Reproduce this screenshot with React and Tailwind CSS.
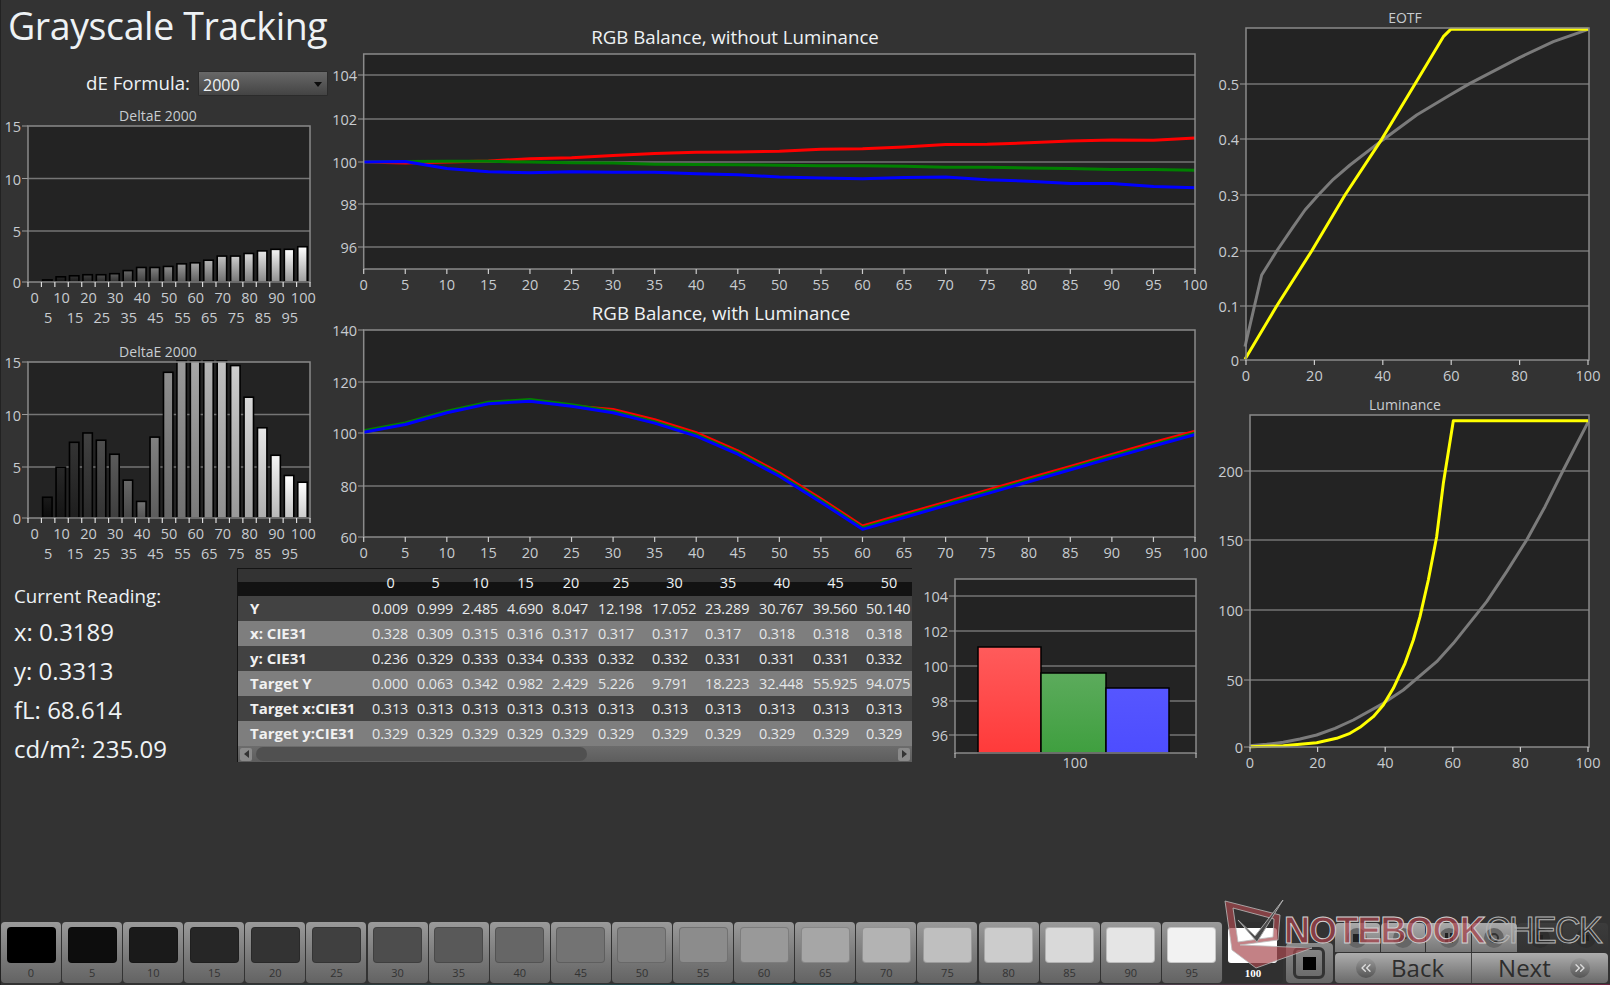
import { ChevronsLeft, ChevronsRight } from "lucide-react";

const labelCls = "fill-[#c8ccd0] text-[14.5px]";
const steps = Array.from({ length: 21 }, (_, i) => i * 5);

const linePts = (pts) => pts.map((p) => p.join(",")).join(" ");

// zoomed crop coords -> page coords
const fromZoom = (pts, ox, oy) => pts.map(([x, y]) => [ox + x / 3, oy + y / 3]);

const deltaA = [0, 0.2, 0.5, 0.6, 0.7, 0.7, 0.8, 1.1, 1.4, 1.4, 1.5, 1.75, 1.85, 2.1, 2.5, 2.5, 2.75, 3.0, 3.15, 3.15, 3.4];
const deltaB = [0, 2, 4.9, 7.3, 8.2, 7.5, 6.15, 3.65, 1.6, 7.8, 14.05, 16, 16, 16, 16, 14.7, 11.65, 8.7, 6.05, 4.1, 3.45];

const balRed = [100, 99.95, 100, 100.05, 100.15, 100.2, 100.3, 100.4, 100.45, 100.47, 100.5, 100.6, 100.62, 100.7, 100.82, 100.83, 100.9, 100.98, 101.03, 101.02, 101.12];
const balGreen = [100, 100.02, 100.03, 100.03, 100, 99.97, 99.95, 99.9, 99.88, 99.87, 99.85, 99.83, 99.83, 99.8, 99.75, 99.75, 99.72, 99.7, 99.65, 99.65, 99.62];
const balBlue = [100, 100.02, 99.7, 99.55, 99.5, 99.55, 99.52, 99.52, 99.45, 99.4, 99.3, 99.25, 99.22, 99.27, 99.3, 99.17, 99.1, 99, 99, 98.85, 98.8];
const lumBlue = [100.3, 103.3, 107.8, 111.3, 112.3, 110.3, 107.8, 103.8, 98.8, 91.8, 83.3, 73.3, 62.8, 67.4, 72, 76.6, 81.2, 85.8, 90.4, 95, 99.4];

const table = [
  ["Y", ["0.009", "0.999", "2.485", "4.690", "8.047", "12.198", "17.052", "23.289", "30.767", "39.560", "50.140"]],
  ["x: CIE31", ["0.328", "0.309", "0.315", "0.316", "0.317", "0.317", "0.317", "0.317", "0.318", "0.318", "0.318"]],
  ["y: CIE31", ["0.236", "0.329", "0.333", "0.334", "0.333", "0.332", "0.332", "0.331", "0.331", "0.331", "0.332"]],
  ["Target Y", ["0.000", "0.063", "0.342", "0.982", "2.429", "5.226", "9.791", "18.223", "32.448", "55.925", "94.075"]],
  ["Target x:CIE31", ["0.313", "0.313", "0.313", "0.313", "0.313", "0.313", "0.313", "0.313", "0.313", "0.313", "0.313"]],
  ["Target y:CIE31", ["0.329", "0.329", "0.329", "0.329", "0.329", "0.329", "0.329", "0.329", "0.329", "0.329", "0.329"]],
];
const tableCols = "grid-cols-[134px_45px_45px_45px_45px_46px_54px_53px_54px_54px_53px_46px]";

const Plot = ({ x0, y0, x1, y1, grid = [] }) => (
  <>
    <rect x={x0} y={y0} width={x1 - x0} height={y1 - y0} fill="#232323" />
    {grid.map((y) => (
      <line key={y} x1={x0} x2={x1} y1={y} y2={y} stroke="#757575" strokeWidth="1.5" />
    ))}
  </>
);

const Frame = ({ x0, y0, x1, y1 }) => (
  <rect x={x0} y={y0} width={x1 - x0} height={y1 - y0} fill="none" stroke="#8a8a8a" strokeWidth="1.5" />
);

const YLabels = ({ items, x }) =>
  items.map(([t, y]) => (
    <g key={t}>
      <line x1={x} x2={x + 6} y1={y} y2={y} stroke="#9a9a9a" />
      <text x={x - 1} y={y + 6} textAnchor="end" className={labelCls}>{t}</text>
    </g>
  ));

const DeltaChart = ({ vals, id }) => {
  const x0 = 28, x1 = 310, y0 = 22, y1 = 178;
  const cat = (x1 - x0) / 21;
  return (
    <svg width="330" height="228" viewBox="0 0 330 228" className="block overflow-visible">
      <text x="158" y="17" textAnchor="middle" className="fill-[#c8ccd0] text-[14px]">DeltaE 2000</text>
      <Plot x0={x0} y0={y0} x1={x1} y1={y1} grid={[74.5, 127]} />
      <defs>
        {vals.map((v, i) => {
          const lvl = Math.round(i * 12.75);
          const low = Math.round(lvl * (id === "a" ? 0.62 : 0.8));
          return (
            <linearGradient key={i} id={`${id}${i}`} x1="0" y1="0" x2="0" y2="1">
              <stop offset="0" stopColor={`rgb(${lvl + 14},${lvl + 14},${lvl + 14})`} />
              <stop offset="1" stopColor={`rgb(${low},${low},${low})`} />
            </linearGradient>
          );
        })}
      </defs>
      {vals.map((v, i) =>
        v > 0 ? (
          <rect
            key={i}
            x={x0 + cat * i + 1.2}
            y={Math.max(y1 - v * 10.37, y0 - 1)}
            width={cat - 4}
            height={Math.min(v * 10.37, y1 - y0 + 1)}
            fill={`url(#${id}${i})`}
            stroke="#000"
            strokeWidth="1.6"
          />
        ) : null
      )}
      <Frame x0={x0} y0={y0} x1={x1} y1={y1} />
      <YLabels x={22} items={[["15", y0], ["10", 74.5], ["5", 127], ["0", y1]]} />
      {Array.from({ length: 22 }, (_, i) => (
        <line key={i} x1={x0 + cat * i} x2={x0 + cat * i} y1={y1} y2={y1 + 5} stroke="#ddd" strokeWidth="1.2" />
      ))}
      {steps.map((p, i) => (
        <text key={p} x={x0 + cat * (i + 0.5)} y={i % 2 ? 219 : 199} textAnchor="middle" className={labelCls}>{p}</text>
      ))}
    </svg>
  );
};

const BalanceChart = ({ title, top, height, y0, y1, grid, yLabels, series, titleY, titleX }) => {
  const x0 = 363.7, x1 = 1195;
  return (
    <svg width="875" height={height} viewBox={`330 ${top} 875 ${height}`} className="block overflow-visible">
      <text x={titleX} y={titleY} textAnchor="middle" className="fill-[#eef2f5] text-[18.7px]">{title}</text>
      <Plot x0={x0} y0={y0} x1={x1} y1={y1} grid={grid} />
      {series.map(([pts, color, w]) => (
        <polyline key={color} points={linePts(pts)} fill="none" stroke={color} strokeWidth={w} strokeLinejoin="round" />
      ))}
      <Frame x0={x0} y0={y0} x1={x1} y1={y1} />
      <YLabels x={358} items={yLabels} />
      {steps.map((p) => {
        const x = x0 + p * 8.313;
        return (
          <g key={p}>
            <line x1={x} x2={x} y1={y1} y2={y1 + 5} stroke="#ccc" strokeWidth="1.2" />
            <text x={x} y={y1 + 21} textAnchor="middle" className={labelCls}>{p}</text>
          </g>
        );
      })}
    </svg>
  );
};

const CurveChart = ({ title, top, titleY, x0, y0, y1, grid, yLabels, xLabels, grey, yellow }) => {
  const x1 = 1589;
  return (
    <svg width="405" height="395" viewBox={`1205 ${top} 405 395`} className="block">
      <text x="1405" y={titleY} textAnchor="middle" className="fill-[#c8ccd0] text-[14px]">{title}</text>
      <Plot x0={x0} y0={y0} x1={x1} y1={y1} grid={grid} />
      <polyline points={linePts(grey)} fill="none" stroke="#7b7b7b" strokeWidth="3" strokeLinejoin="round" />
      <polyline points={linePts(yellow)} fill="none" stroke="#ffff00" strokeWidth="3" strokeLinejoin="round" />
      <Frame x0={x0} y0={y0} x1={x1} y1={y1} />
      <YLabels x={x0 - 6} items={yLabels} />
      {xLabels.map((p) => {
        const x = x0 + (p * (x1 - x0 - 1)) / 100;
        return (
          <g key={p}>
            <line x1={x} x2={x} y1={y1} y2={y1 + 5} stroke="#ccc" strokeWidth="1.2" />
            <text x={x} y={y1 + 21} textAnchor="middle" className={labelCls}>{p}</text>
          </g>
        );
      })}
    </svg>
  );
};

const RgbBars = () => {
  const bars = [
    [978, 63, 647, "rgbR"],
    [1041, 65, 673, "rgbG"],
    [1106, 63, 688, "rgbB"],
  ];
  return (
    <svg width="293" height="222" viewBox="912 568 293 222" className="block">
      <defs>
        <linearGradient id="rgbR" x1="0" y1="0" x2="0" y2="1">
          <stop offset="0" stopColor="#ff5b5b" />
          <stop offset="1" stopColor="#ff3a3a" />
        </linearGradient>
        <linearGradient id="rgbG" x1="0" y1="0" x2="0" y2="1">
          <stop offset="0" stopColor="#5cab5c" />
          <stop offset="1" stopColor="#3f9f3f" />
        </linearGradient>
        <linearGradient id="rgbB" x1="0" y1="0" x2="0" y2="1">
          <stop offset="0" stopColor="#5656ff" />
          <stop offset="1" stopColor="#4d4dff" />
        </linearGradient>
      </defs>
      <Plot x0={955} y0={579} x1={1196} y1={753} grid={[596, 631, 666, 701, 735]} />
      {bars.map(([x, w, y, g]) => (
        <rect key={g} x={x} y={y} width={w} height={753 - y} fill={`url(#${g})`} stroke="#000" strokeWidth="1.5" />
      ))}
      <Frame x0={955} y0={579} x1={1196} y1={753} />
      <YLabels x={949} items={[["104", 596], ["102", 631], ["100", 666], ["98", 701], ["96", 735]]} />
      <line x1="955" x2="955" y1="753" y2="758" stroke="#ccc" />
      <line x1="1196" x2="1196" y1="753" y2="758" stroke="#ccc" />
      <text x="1075" y="768" textAnchor="middle" className={labelCls}>100</text>
    </svg>
  );
};

const Swatch = ({ pct }) => {
  const c = Math.round(pct * 2.55);
  return (
    <div className="flex h-[61px] w-[60px] shrink-0 flex-col items-center rounded-[4px] bg-gradient-to-b from-[#9a9a9a] to-[#636363] pt-[5px]">
      <div className="h-[36px] w-[49px] rounded-[4px] border border-[#0000002e]" style={{ backgroundColor: `rgb(${c},${c},${c})` }} />
      <span className="mt-[2px] text-[11px] leading-[16px] text-[#333]">{pct}</span>
    </div>
  );
};

const Transport = ({ children, dim }) => (
  <div className={`flex h-[29px] flex-1 items-center justify-center rounded-t-[4px] ${dim ? "bg-gradient-to-b from-[#3c3c3c] to-[#333]" : "bg-gradient-to-b from-[#aaa] to-[#777]"}`}>
    <div className={`flex size-[20px] items-center justify-center rounded-full ${dim ? "bg-[#2e2e2e]" : "bg-[#666]"}`}>{children}</div>
  </div>
);

const Watermark = () => (
  <div className="pointer-events-none absolute top-[900px] left-[1222px] flex items-start">
    <svg width="100" height="72" viewBox="0 0 100 72" className="block">
      <path d="M2 1 L57 15 L55 40 L17 45 L89 48 L33 68 L9 50 Z M10 8 L15 42 L50 37 L51 19 Z" fill="#a8484eb0" fillRule="evenodd" stroke="#bcbcbc" strokeWidth="0.8" />
      <path d="M15 20 L32 36 L60 0 L34 42 Z" fill="#4a4a4a" stroke="#aaa" strokeWidth="1" />
    </svg>
    <span className="mt-[12px] -ml-[39px] font-['Liberation_Sans',sans-serif] text-[36px] leading-[38px] font-bold tracking-[-0.9px] text-[#a8424bb8] [-webkit-text-stroke:1px_#d0d0d0]">NOTEBOOK</span>
    <span className="mt-[12px] font-['Liberation_Sans',sans-serif] text-[36px] leading-[38px] tracking-[-2px] text-transparent [-webkit-text-stroke:1px_#b5b5b5]">CHECK</span>
  </div>
);

export default function App() {
  return (
    <div className="relative flex h-[985px] w-[1610px] flex-col overflow-hidden border-l border-[#222] bg-[#333333] font-['Open_Sans','Noto_Sans',sans-serif] text-[#eef2f5]">
      <div className="-ml-px flex h-[922px]">
        <div className="flex w-[1205px] shrink-0 flex-col">
          <div className="flex h-[568px]">
            <div className="flex w-[330px] shrink-0 flex-col">
              <h1 className="h-[71px] pl-[8px] text-[37.5px] leading-[52px] font-normal tracking-[-0.4px] whitespace-nowrap">Grayscale Tracking</h1>
              <div className="flex h-[33px] items-start justify-end pr-[2px]">
                <span className="mr-[8px] text-[18.7px] leading-[24px]">dE Formula:</span>
                <div className="relative flex h-[25px] w-[130px] items-center rounded-[1px] border border-[#2b2b2b] bg-gradient-to-b from-[#686868] to-[#444] pl-[4px] text-[16px] leading-[25px]">
                  <span className="mt-[3px]">2000</span>
                  <div className="absolute top-[10px] right-[5px] h-0 w-0 border-x-[4px] border-t-[5px] border-x-transparent border-t-[#0d0d0d]" />
                </div>
              </div>
              <div className="h-[236px]"><DeltaChart vals={deltaA} id="a" /></div>
              <DeltaChart vals={deltaB} id="b" />
            </div>
            <div className="flex w-[875px] shrink-0 flex-col">
              <BalanceChart
                title="RGB Balance, without Luminance"
                top={0}
                height={300}
                titleX={735}
                titleY={44}
                y0={54}
                y1={269}
                grid={[75, 119, 162, 204, 247]}
                yLabels={[["104", 75], ["102", 119], ["100", 162], ["98", 204], ["96", 247]]}
                series={[
                  [balRed.map((v, i) => [363.7 + i * 41.57, 162 - (v - 100) * 21.4]), "#ff0000", 3],
                  [balGreen.map((v, i) => [363.7 + i * 41.57, 162 - (v - 100) * 21.4]), "#008000", 3],
                  [balBlue.map((v, i) => [363.7 + i * 41.57, 162 - (v - 100) * 21.4]), "#0000ff", 3],
                ]}
              />
              <BalanceChart
                title="RGB Balance, with Luminance"
                top={300}
                height={268}
                titleX={721}
                titleY={320}
                y0={330}
                y1={537}
                grid={[382, 433, 486]}
                yLabels={[["140", 330], ["120", 382], ["100", 433], ["80", 486], ["60", 537]]}
                series={[
                  [lumBlue.map((v, i) => [363.7 + i * 41.57, 433 - (v + (i < 6 ? 0.2 : 1.4) - 100) * 2.59]), "#ff0000", 2.5],
                  [lumBlue.map((v, i) => [363.7 + i * 41.57, 433 - (v + 0.7 - 100) * 2.59]), "#008000", 2.5],
                  [lumBlue.map((v, i) => [363.7 + i * 41.57, 433 - (v - 100) * 2.59]), "#0000ff", 3],
                ]}
              />
            </div>
          </div>

          <div className="flex">
            <div className="flex w-[237px] shrink-0 flex-col pt-[15px] pl-[14px]">
              <span className="text-[18.7px] leading-[26px]">Current Reading:</span>
              <span className="mt-[3px] text-[24px] leading-[39px]">x: 0.3189</span>
              <span className="text-[24px] leading-[39px]">y: 0.3313</span>
              <span className="text-[24px] leading-[39px]">fL: 68.614</span>
              <span className="text-[24px] leading-[39px]">cd/m²: 235.09</span>
            </div>
            <div className="h-[194px] w-[675px] shrink-0 overflow-hidden border-t border-l border-[#141414] text-[14.4px] whitespace-nowrap">
              <div className={`grid h-[27px] ${tableCols} bg-gradient-to-b from-[#333] from-50% to-[#121212] to-50% font-normal text-[#eef2f5]`}>
                <span />
                {["0", "5", "10", "15", "20", "25", "30", "35", "40", "45", "50"].map((h, i) => (
                  <span key={h} className={`pt-[3px] text-center leading-[22px] ${i < 10 ? "pr-[8px]" : ""}`}>{h}</span>
                ))}
              </div>
              {table.map(([name, vals], r) => (
                <div key={name} className={`grid h-[25px] ${tableCols} items-center ${r % 2 ? "bg-[#7e7e7e] text-[#e4e6e8]" : "bg-[#424242] text-[#e8eaec]"}`}>
                  <span className="pl-[12px] text-[15px] font-bold text-[#f1f1f1]">{name}</span>
                  {vals.map((v, i) => (
                    <span key={i} className="tracking-[-0.1px]">{v}</span>
                  ))}
                </div>
              ))}
              <div className="flex h-[16px] items-center bg-gradient-to-b from-[#6c6c6c] to-[#5d5d5d] px-[2px]">
                <div className="flex h-[13px] w-[12px] items-center justify-center rounded-[2px] bg-[#8a8a8a]">
                  <div className="h-0 w-0 border-y-[4px] border-r-[5px] border-y-transparent border-r-[#333]" />
                </div>
                <div className="ml-[4px] h-[14px] w-[331px] rounded-full bg-[#505050]" />
                <div className="flex-1" />
                <div className="flex h-[13px] w-[12px] items-center justify-center rounded-[2px] bg-[#8a8a8a]">
                  <div className="h-0 w-0 border-y-[4px] border-l-[5px] border-y-transparent border-l-[#333]" />
                </div>
              </div>
            </div>
            <RgbBars />
          </div>
        </div>

        <div className="flex w-[405px] shrink-0 flex-col">
          <CurveChart
            title="EOTF"
            top={0}
            titleY={23}
            x0={1246}
            y0={28}
            y1={360}
            grid={[84, 139, 195, 251, 306]}
            yLabels={[["0.5", 84], ["0.4", 139], ["0.3", 195], ["0.2", 251], ["0.1", 306], ["0", 360]]}
            xLabels={[0, 20, 40, 60, 80, 100]}
            grey={fromZoom([[105, 1040], [155, 825], [200, 753], [250, 680], [285, 630], [325, 585], [370, 538], [420, 495], [515, 422], [620, 345], [720, 285], [780, 250], [930, 172], [1030, 125], [1135, 88]], 1210, 0)}
            yellow={fromZoom([[105, 1078], [200, 918], [305, 753], [405, 585], [515, 418], [615, 252], [700, 110], [722, 88], [1135, 88]], 1210, 0)}
          />
          <CurveChart
            title="Luminance"
            top={395}
            titleY={410}
            x0={1250}
            y0={415}
            y1={747}
            grid={[471, 540, 610, 680]}
            yLabels={[["200", 471], ["150", 540], ["100", 610], ["50", 680], ["0", 747]]}
            xLabels={[0, 20, 40, 60, 80, 100]}
            grey={fromZoom([[118, 1067], [170, 1063], [220, 1057], [270, 1047], [320, 1035], [375, 1015], [430, 990], [520, 940], [580, 900], [680, 815], [730, 760], [830, 635], [890, 545], [950, 450], [1005, 350], [1060, 240], [1135, 95]], 1210, 390)}
            yellow={fromZoom([[120, 1070], [220, 1067], [320, 1058], [380, 1045], [420, 1030], [450, 1012], [490, 980], [520, 945], [550, 895], [585, 820], [610, 750], [630, 680], [655, 570], [680, 440], [700, 280], [730, 92], [1135, 92]], 1210, 390)}
          />
        </div>
      </div>

      {/* bottom strip */}
      <div className="-ml-px flex h-[62px] items-start gap-[1.1px] pl-[1px]">
        {steps.slice(0, 20).map((p) => (
          <Swatch key={p} pct={p} />
        ))}
        <div className="flex h-[61px] w-[60px] shrink-0 flex-col items-center rounded-[4px] bg-[#303030] pt-[6px]">
          <div className="h-[35px] w-[49px] rounded-[3px] bg-white" />
          <span className="mt-[2px] font-['Liberation_Serif',serif] text-[11px] leading-[16px] font-bold text-white">100</span>
        </div>
        <div className="mt-[21px] ml-[2px] flex h-[40px] w-[47px] shrink-0 items-center justify-center rounded-[4px] bg-gradient-to-b from-[#8a8a8a] to-[#666]">
          <div className="flex size-[32px] items-center justify-center rounded-[6px] border-[3px] border-[#333]">
            <div className="size-[13px] bg-black" />
          </div>
        </div>
        <div className="ml-[1px] flex w-[273px] shrink-0 flex-col gap-[1px] pt-[1px]">
          <div className="flex gap-[1px]">
            <Transport><div className="size-[8px] bg-[#222]" /></Transport>
            <Transport><div className="h-0 w-0 border-y-[5px] border-l-[8px] border-y-transparent border-l-[#222]" /></Transport>
            <Transport><div className="h-[10px] w-[8px] border-x-[3px] border-[#222]" /></Transport>
            <Transport><div className="size-[10px] rounded-full border-2 border-[#333]" /></Transport>
            <Transport dim><div className="size-[6px] bg-[#222]" /></Transport>
            <Transport dim><div className="size-[6px] bg-[#222]" /></Transport>
          </div>
          <div className="flex h-[30px] rounded-[4px] bg-gradient-to-b from-[#adadad] to-[#6b6b6b] text-[24px] leading-[30px] font-medium text-[#2d2d2d]">
            <div className="flex w-[137px] items-center border-r border-[#444] pl-[21px]">
              <div className="flex size-[20px] items-center justify-center rounded-full bg-gradient-to-b from-[#9a9a9a] to-[#555]">
                <ChevronsLeft size={16} color="#dddddd" />
              </div>
              <span className="ml-[15px]">Back</span>
            </div>
            <div className="flex flex-1 items-center pl-[26px]">
              <span>Next</span>
              <div className="mr-[18px] ml-auto flex size-[20px] items-center justify-center rounded-full bg-gradient-to-b from-[#9a9a9a] to-[#555]">
                <ChevronsRight size={16} color="#dddddd" />
              </div>
            </div>
          </div>
        </div>
      </div>
      <div className="-ml-px h-px bg-gradient-to-r from-[#333] from-[8%] via-[#1d4f55] to-[#6b2140]" />
      <Watermark />
    </div>
  );
}
